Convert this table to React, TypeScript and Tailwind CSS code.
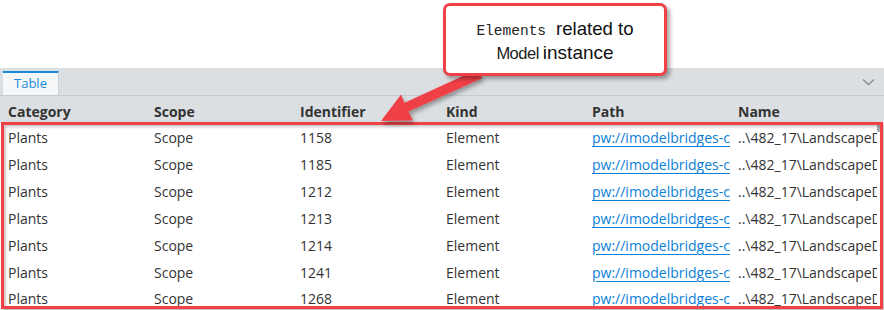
import React from "react";

const rows = [
  { id: "1158" },
  { id: "1185" },
  { id: "1212" },
  { id: "1213" },
  { id: "1214" },
  { id: "1241" },
  { id: "1268" },
];

const cols = ["Category", "Scope", "Identifier", "Kind", "Path", "Name"];

function Cell({ children, last }: { children: React.ReactNode; last?: boolean }) {
  return (
    <div
      className={`${last ? "flex-1" : "w-[146px] shrink-0"} pl-[8px] pr-[8px] pt-[3px] overflow-hidden whitespace-nowrap flex items-center`}
    >
      {children}
    </div>
  );
}

export default function App() {
  return (
    <div
      className="relative w-[884px] h-[310px] overflow-hidden bg-white text-[#333]"
      style={{ fontFamily: '"Open Sans", "Noto Sans", sans-serif' }}
    >
      <div className="h-[68px]" />

      {/* tab strip */}
      <div className="h-[28px] bg-[#dcdfe2] border-b border-[#c7cacd] flex items-stretch relative">
        <div className="ml-[3px] mt-[3px] w-[56px] bg-[#f6f7f8] border-t-2 border-[#1a8ad8] border-r border-r-[#cfd2d5] flex justify-center">
          <span className="text-[13px] text-[#1a8ad8] leading-[20px]">Table</span>
        </div>
        <div className="flex-1" />
        <div className="w-[30px] flex items-center justify-center pr-[2px]">
          <svg width="13" height="8" viewBox="0 0 13 8" fill="none">
            <polyline points="1,1.5 6.5,6.5 12,1.5" stroke="#8a8d91" strokeWidth="1.3" />
          </svg>
        </div>
      </div>

      {/* header */}
      <div className="h-[27px] bg-[#dcdfe2] flex text-[14px] font-bold text-[#333]">
        {cols.map((c, i) => (
          <Cell key={c} last={i === cols.length - 1}>
            {c}
          </Cell>
        ))}
      </div>

      {/* body */}
      <div className="w-[877px] overflow-hidden flex flex-col text-[14px] text-[#333]">
        {rows.map((r) => (
          <div key={r.id} className="h-[26.85px] flex">
            <Cell>Plants</Cell>
            <Cell>Scope</Cell>
            <Cell>{r.id}</Cell>
            <Cell>Element</Cell>
            <Cell>
              <span className="text-[#0b80d8] underline underline-offset-[3px]">
                pw://imodelbridges-connect-files
              </span>
            </Cell>
            <Cell last>..\482_17\LandscapeDesign.dgn</Cell>
          </div>
        ))}
      </div>

      {/* scrollbar thumb */}
      <div className="absolute left-[877px] top-[124px] w-[4px] h-[8px] rounded-[2px] bg-[#a9abae]" />

      {/* highlight around rows */}
      <div
        className="absolute left-[1px] top-[122px] w-[882px] h-[187px] border-[3px] border-[#ef4146]"
        style={{ boxShadow: "2px 2px 3px rgba(0,0,0,0.3), inset 2px 2px 3px rgba(0,0,0,0.22)" }}
      />

      {/* pointer arrow */}
      <svg className="absolute left-0 top-0 pointer-events-none" width="884" height="310">
        <defs>
          <filter id="arrowShadow" x="-20%" y="-20%" width="140%" height="140%">
            <feDropShadow dx="2" dy="3" stdDeviation="2" floodColor="#000" floodOpacity="0.35" />
          </filter>
        </defs>
        <polygon
          points="381,121 413,120.5 408.5,111.5 482,78.3 477.7,69.3 404.5,102.8 401,94.5"
          fill="#ef4146"
          filter="url(#arrowShadow)"
        />
      </svg>

      {/* callout */}
      <div
        className="absolute left-[443px] top-[3px] w-[224px] h-[73px] bg-white border-[3.5px] border-[#ef4146] rounded-[7px] flex flex-col items-center justify-center pt-[3px]"
        style={{ boxShadow: "3px 3px 4px rgba(0,0,0,0.35)" }}
      >
        <div className="flex items-baseline leading-[21px] text-[#111]">
          <span className="text-[14.5px] text-[#222]" style={{ fontFamily: '"Liberation Mono", "DejaVu Sans Mono", monospace' }}>
            Elements
          </span>
          <span className="ml-[10px] text-[18.6px]" style={{ fontFamily: '"Liberation Sans", Arial, sans-serif' }}>
            related to
          </span>
        </div>
        <div className="flex items-baseline leading-[21px] text-[#111]" style={{ fontFamily: '"Liberation Sans", Arial, sans-serif' }}>
          <span className="text-[16.5px] tracking-[-0.5px] text-[#222]">Model</span>
          <span className="ml-[4px] text-[19px]">instance</span>
        </div>
      </div>
    </div>
  );
}
